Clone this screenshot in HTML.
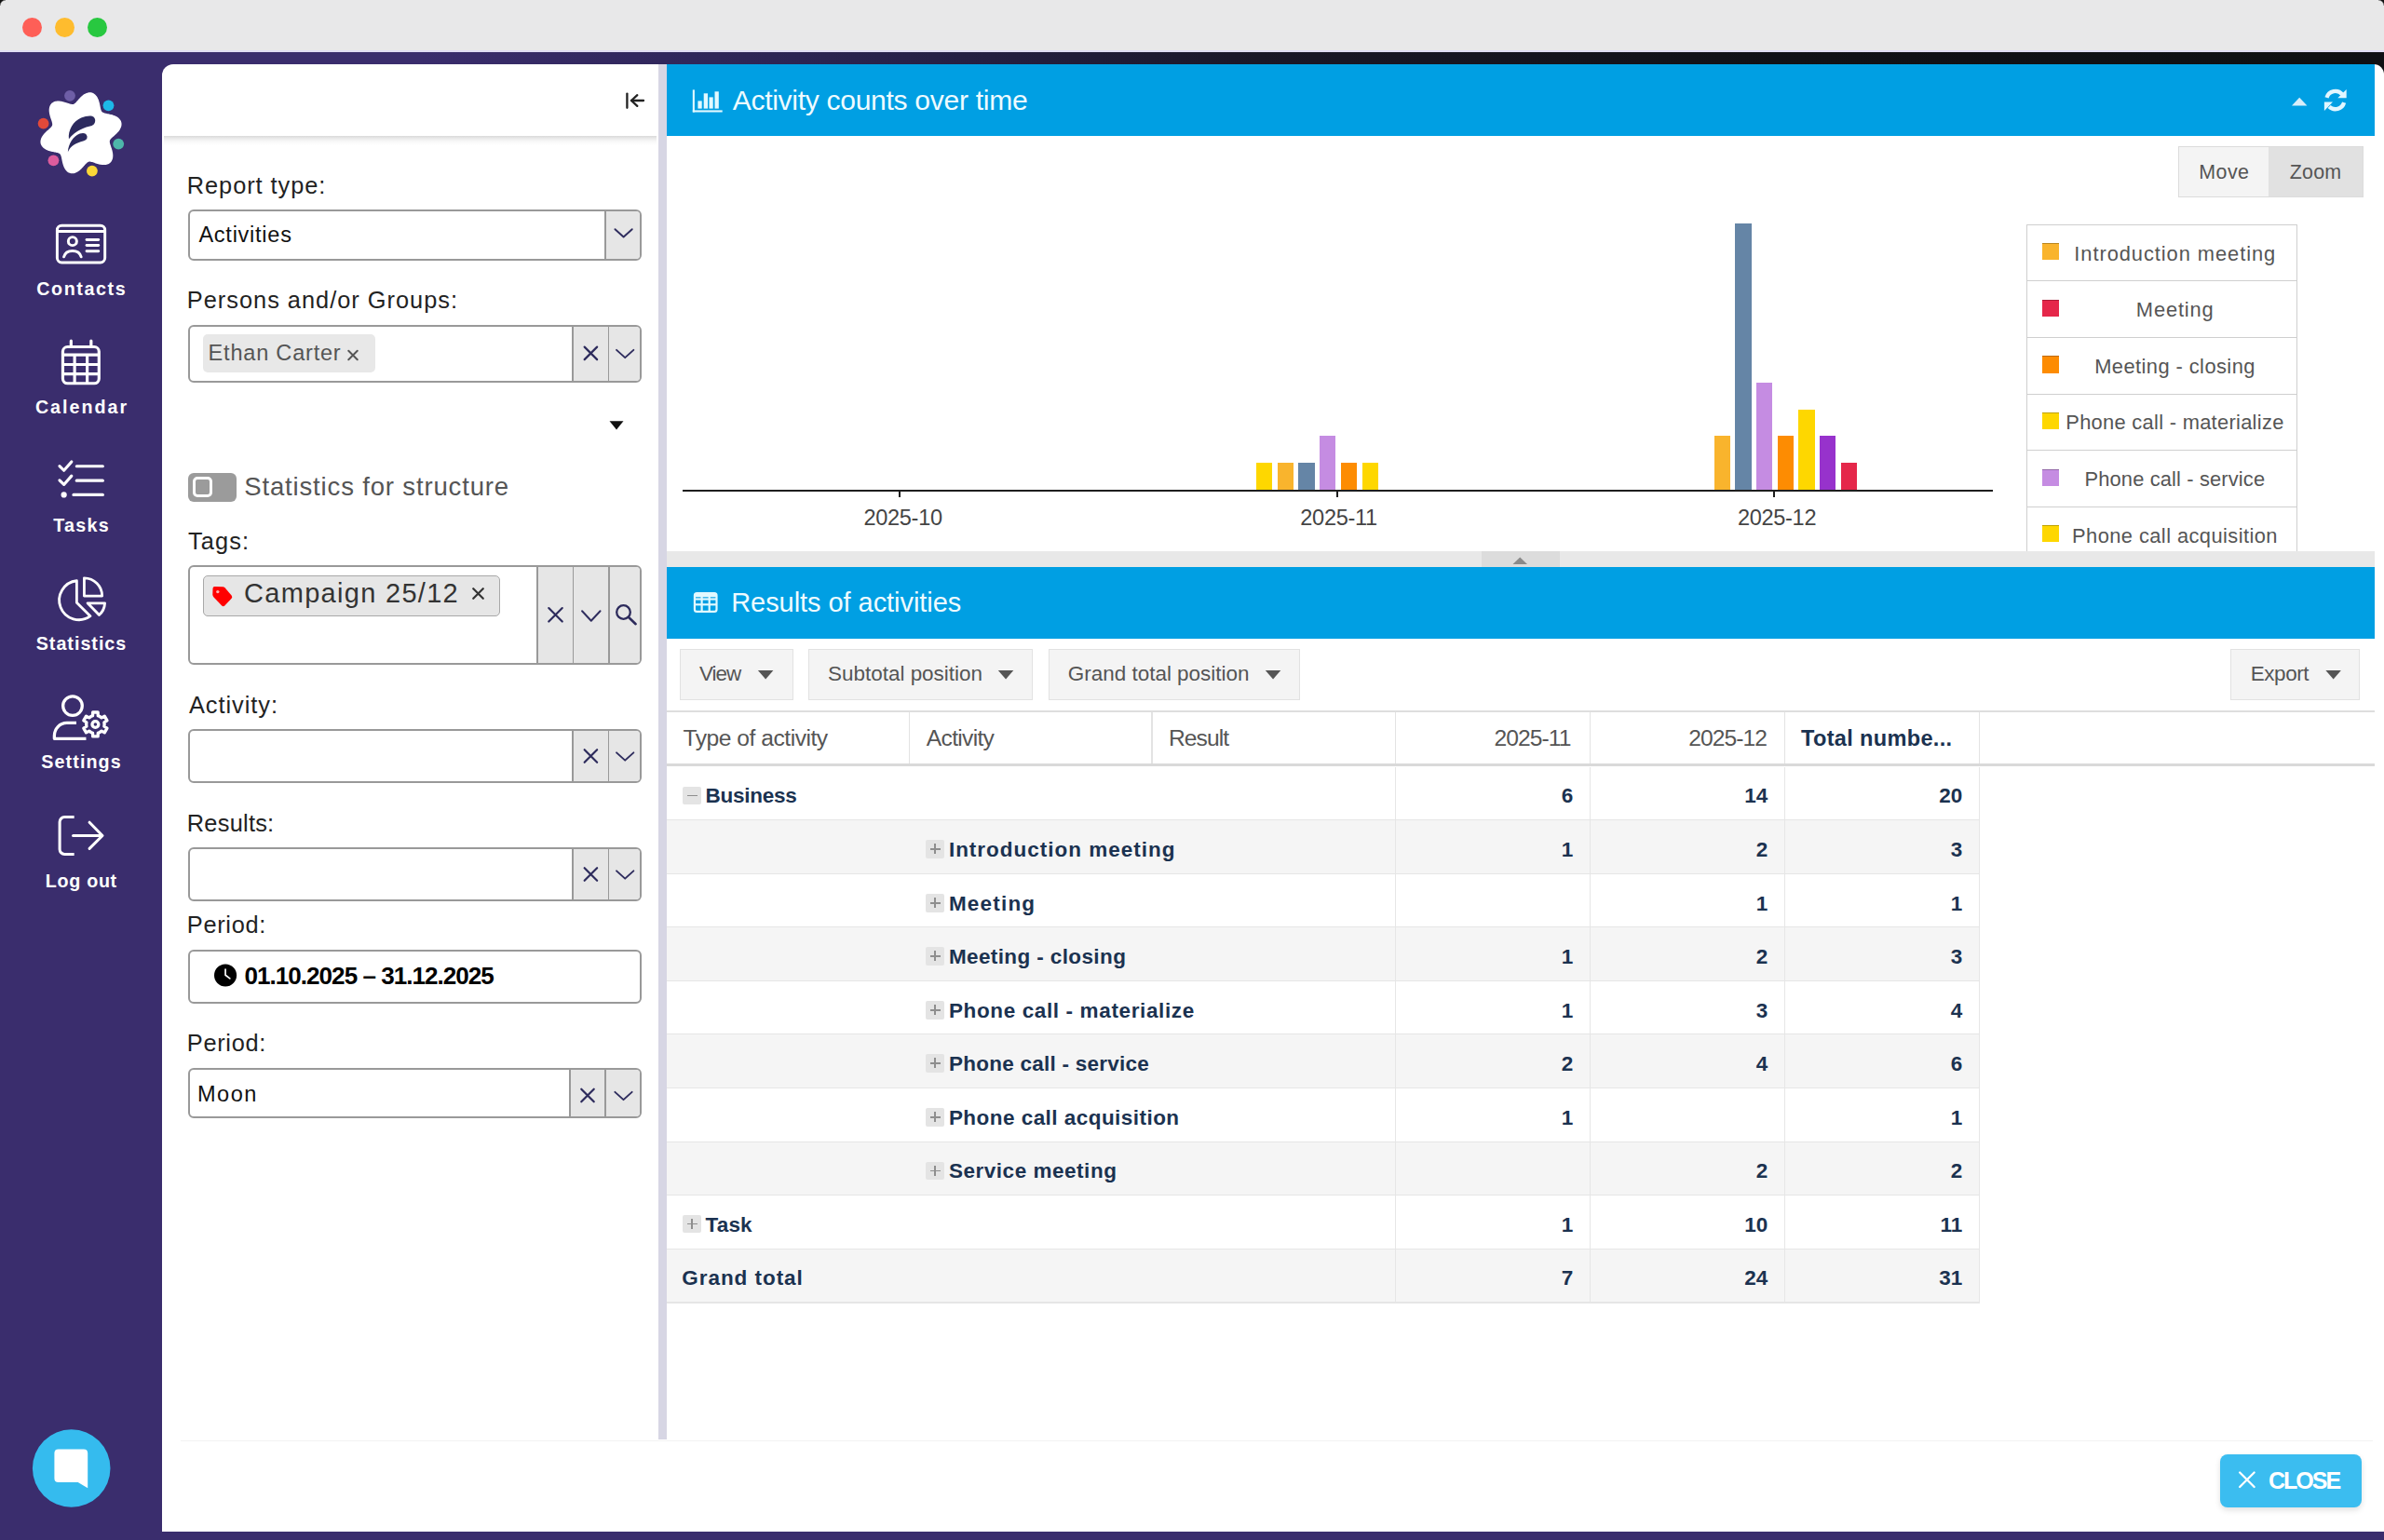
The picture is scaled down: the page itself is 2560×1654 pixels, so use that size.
<!DOCTYPE html><html><head><meta charset="utf-8"><style>
html,body{margin:0;padding:0;}
body{width:2560px;height:1654px;overflow:hidden;position:relative;background:#3a2d6d;font-family:"Liberation Sans",sans-serif;}
.t{position:absolute;white-space:nowrap;line-height:1;}
.b{position:absolute;box-sizing:border-box;}
svg{position:absolute;overflow:visible;}
</style></head><body>
<div class="b" style="left:0.00px;top:0.00px;width:2560.00px;height:55.00px;background:#e8e8e9;"></div>
<div class="b" style="left:0.00px;top:0.00px;width:6.00px;height:6.00px;background:radial-gradient(circle at 6px 6px,rgba(0,0,0,0) 5px,#111 6.5px);"></div>
<div class="b" style="left:2554.00px;top:0.00px;width:6.00px;height:6.00px;background:radial-gradient(circle at 0px 6px,rgba(0,0,0,0) 5px,#111 6.5px);"></div>
<div class="b" style="left:0.00px;top:53.50px;width:2560.00px;height:2.50px;background:#e0dcf3;"></div>
<div class="b" style="left:24.00px;top:18.60px;width:21.40px;height:21.40px;background:#fe5f57;border-radius:50%;"></div>
<div class="b" style="left:58.80px;top:18.60px;width:21.40px;height:21.40px;background:#febc2e;border-radius:50%;"></div>
<div class="b" style="left:93.80px;top:18.60px;width:21.40px;height:21.40px;background:#28c840;border-radius:50%;"></div>
<div class="b" style="left:0.00px;top:56.00px;width:2560.00px;height:34.00px;background:linear-gradient(to right,#3a2d6d 0px,#3a2d6d 450px,#2c2453 850px,#1a1727 1350px,#111116 1900px,#0f1013 2560px);"></div>
<div class="b" style="left:174.00px;top:69.00px;width:2386.00px;height:1576.00px;background:#fff;border-top-left-radius:12px;border-top-right-radius:11px;"></div>
<div class="t" style="left:2.00px;width:170px;text-align:center;top:300.52px;font-size:19.7px;color:#fff;font-weight:bold;letter-spacing:1.6px;text-indent:1.6px;">Contacts</div>
<div class="t" style="left:2.00px;width:170px;text-align:center;top:428.02px;font-size:19.7px;color:#fff;font-weight:bold;letter-spacing:2.0px;text-indent:2.0px;">Calendar</div>
<div class="t" style="left:2.00px;width:170px;text-align:center;top:555.32px;font-size:19.7px;color:#fff;font-weight:bold;letter-spacing:1.3px;text-indent:1.3px;">Tasks</div>
<div class="t" style="left:2.00px;width:170px;text-align:center;top:681.62px;font-size:19.7px;color:#fff;font-weight:bold;letter-spacing:1.0px;text-indent:1.0px;">Statistics</div>
<div class="t" style="left:2.00px;width:170px;text-align:center;top:808.72px;font-size:19.7px;color:#fff;font-weight:bold;letter-spacing:1.1px;text-indent:1.1px;">Settings</div>
<div class="t" style="left:2.00px;width:170px;text-align:center;top:936.52px;font-size:19.7px;color:#fff;font-weight:bold;letter-spacing:0.7px;text-indent:0.7px;">Log out</div>
<div class="b" style="left:176.00px;top:146.00px;width:529.00px;height:10.00px;background:linear-gradient(to bottom,#d9d9d9 0px,#ececec 3px,#f8f8f8 6px,rgba(255,255,255,0) 10px);"></div>
<div class="b" style="left:707.00px;top:69.00px;width:9.00px;height:1477.00px;background:#d7d6e4;"></div>
<div class="t" style="left:200.80px;top:186.53px;font-size:25.36px;color:#222;font-weight:normal;letter-spacing:0.95px;">Report type:</div>
<div class="t" style="left:200.80px;top:309.78px;font-size:25.36px;color:#222;font-weight:normal;letter-spacing:1.0px;">Persons and/or Groups:</div>
<div class="t" style="left:202.00px;top:568.53px;font-size:25.36px;color:#222;font-weight:normal;letter-spacing:1.1px;">Tags:</div>
<div class="t" style="left:203.00px;top:744.78px;font-size:25.36px;color:#222;font-weight:normal;letter-spacing:0.96px;">Activity:</div>
<div class="t" style="left:200.80px;top:871.53px;font-size:25.36px;color:#222;font-weight:normal;letter-spacing:0.25px;">Results:</div>
<div class="t" style="left:200.80px;top:980.53px;font-size:25.36px;color:#222;font-weight:normal;letter-spacing:0.7px;">Period:</div>
<div class="t" style="left:200.80px;top:1108.03px;font-size:25.36px;color:#222;font-weight:normal;letter-spacing:0.7px;">Period:</div>
<div class="b" style="left:202.20px;top:224.50px;width:486.90px;height:55.50px;border:2px solid #999999;border-radius:6px;background:#fff;"></div>
<div class="b" style="left:650.20px;top:226.50px;width:36.90px;height:51.50px;background:#e6e6e6;border-top-right-radius:4px;border-bottom-right-radius:4px;"></div>
<div class="b" style="left:649.40px;top:225.50px;width:1.60px;height:53.50px;background:#999999;"></div>
<div class="t" style="left:213.40px;top:240.56px;font-size:23.55px;color:#111;font-weight:normal;letter-spacing:0.74px;">Activities</div>
<div class="b" style="left:202.20px;top:348.50px;width:486.90px;height:62.00px;border:2px solid #999999;border-radius:6px;background:#fff;"></div>
<div class="b" style="left:615.20px;top:350.50px;width:71.90px;height:58.00px;background:#e6e6e6;border-top-right-radius:4px;border-bottom-right-radius:4px;"></div>
<div class="b" style="left:614.40px;top:349.50px;width:1.60px;height:60.00px;background:#999999;"></div>
<div class="b" style="left:652.60px;top:349.50px;width:1.60px;height:60.00px;background:#999999;"></div>
<div class="b" style="left:218.00px;top:358.75px;width:184.50px;height:40.75px;background:#e8e8e8;border-radius:5px;"></div>
<div class="t" style="left:223.60px;top:367.56px;font-size:23.55px;color:#555;font-weight:normal;letter-spacing:0.78px;">Ethan Carter</div>
<div class="b" style="left:202.00px;top:507.50px;width:52.00px;height:31.00px;background:#9b9b9b;border-radius:6px;"></div>
<div class="b" style="left:206.80px;top:512.30px;width:21.50px;height:21.50px;border:3.2px solid #fff;border-radius:5px;background:#9b9b9b;"></div>
<div class="t" style="left:262.20px;top:508.69px;font-size:27.54px;color:#555;font-weight:normal;letter-spacing:0.84px;">Statistics for structure</div>
<div class="b" style="left:202.20px;top:607.00px;width:486.90px;height:107.00px;border:2px solid #999999;border-radius:6px;background:#fff;"></div>
<div class="b" style="left:577.00px;top:609.00px;width:110.10px;height:103.00px;background:#e6e6e6;border-top-right-radius:4px;border-bottom-right-radius:4px;"></div>
<div class="b" style="left:576.20px;top:608.00px;width:1.60px;height:105.00px;background:#999999;"></div>
<div class="b" style="left:614.70px;top:608.00px;width:1.60px;height:105.00px;background:#999999;"></div>
<div class="b" style="left:652.95px;top:608.00px;width:1.60px;height:105.00px;background:#999999;"></div>
<div class="b" style="left:218.25px;top:617.50px;width:318.50px;height:44.50px;background:#e6e6e6;border:1.6px solid #a8a8a8;border-radius:5px;"></div>
<div class="t" style="left:262.00px;top:622.96px;font-size:28.99px;color:#333;font-weight:normal;letter-spacing:1.31px;">Campaign 25/12</div>
<div class="b" style="left:202.20px;top:783.00px;width:486.90px;height:58.00px;border:2px solid #999999;border-radius:6px;background:#fff;"></div>
<div class="b" style="left:615.20px;top:785.00px;width:71.90px;height:54.00px;background:#e6e6e6;border-top-right-radius:4px;border-bottom-right-radius:4px;"></div>
<div class="b" style="left:614.40px;top:784.00px;width:1.60px;height:56.00px;background:#999999;"></div>
<div class="b" style="left:652.60px;top:784.00px;width:1.60px;height:56.00px;background:#999999;"></div>
<div class="b" style="left:202.20px;top:910.00px;width:486.90px;height:58.00px;border:2px solid #999999;border-radius:6px;background:#fff;"></div>
<div class="b" style="left:615.20px;top:912.00px;width:71.90px;height:54.00px;background:#e6e6e6;border-top-right-radius:4px;border-bottom-right-radius:4px;"></div>
<div class="b" style="left:614.40px;top:911.00px;width:1.60px;height:56.00px;background:#999999;"></div>
<div class="b" style="left:652.60px;top:911.00px;width:1.60px;height:56.00px;background:#999999;"></div>
<div class="b" style="left:202.20px;top:1020.00px;width:486.90px;height:57.75px;border:2px solid #999999;border-radius:6px;background:#fff;"></div>
<div class="t" style="left:262.50px;top:1034.93px;font-size:26.07px;color:#000;font-weight:bold;letter-spacing:-0.98px;">01.10.2025 – 31.12.2025</div>
<div class="b" style="left:202.20px;top:1147.00px;width:486.90px;height:54.25px;border:2px solid #999999;border-radius:6px;background:#fff;"></div>
<div class="b" style="left:612.00px;top:1149.00px;width:75.10px;height:50.25px;background:#e6e6e6;border-top-right-radius:4px;border-bottom-right-radius:4px;"></div>
<div class="b" style="left:611.20px;top:1148.00px;width:1.60px;height:52.25px;background:#999999;"></div>
<div class="b" style="left:649.20px;top:1148.00px;width:1.60px;height:52.25px;background:#999999;"></div>
<div class="t" style="left:212.00px;top:1164.06px;font-size:23.55px;color:#111;font-weight:normal;letter-spacing:1.48px;">Moon</div>
<div class="b" style="left:716.00px;top:69.00px;width:1833.50px;height:77.00px;background:#009fe3;"></div>
<div class="t" style="left:786.70px;top:93.30px;font-size:30.07px;color:#eefbff;font-weight:normal;letter-spacing:-0.3px;">Activity counts over time</div>
<div class="b" style="left:2339.30px;top:156.90px;width:198.40px;height:54.90px;border:1px solid #dcdcdc;background:#f4f4f4;"></div>
<div class="b" style="left:2436.40px;top:157.90px;width:100.30px;height:52.90px;background:#e1e1e1;"></div>
<div class="t" style="left:2338.20px;width:100px;text-align:center;top:175.04px;font-size:21.45px;color:#555;font-weight:normal;letter-spacing:0.43px;text-indent:0.43px;">Move</div>
<div class="t" style="left:2436.50px;width:100px;text-align:center;top:175.04px;font-size:21.45px;color:#555;font-weight:normal;letter-spacing:0.19px;text-indent:0.19px;">Zoom</div>
<div class="b" style="left:733.00px;top:525.60px;width:1407.30px;height:2.00px;background:#1e1e1e;"></div>
<div class="b" style="left:965.25px;top:527.00px;width:2.00px;height:7.30px;background:#1e1e1e;"></div>
<div class="b" style="left:1434.75px;top:527.00px;width:2.00px;height:7.30px;background:#1e1e1e;"></div>
<div class="b" style="left:1904.00px;top:527.00px;width:2.00px;height:7.30px;background:#1e1e1e;"></div>
<div class="t" style="left:899.75px;width:140px;text-align:center;top:545.06px;font-size:23.55px;color:#444;font-weight:normal;letter-spacing:-0.3px;text-indent:-0.3px;">2025-10</div>
<div class="t" style="left:1367.75px;width:140px;text-align:center;top:545.06px;font-size:23.55px;color:#444;font-weight:normal;letter-spacing:-0.3px;text-indent:-0.3px;">2025-11</div>
<div class="t" style="left:1838.20px;width:140px;text-align:center;top:545.06px;font-size:23.55px;color:#444;font-weight:normal;letter-spacing:-0.3px;text-indent:-0.3px;">2025-12</div>
<div class="b" style="left:1348.75px;top:496.98px;width:17.40px;height:29.22px;background:#fed700;"></div>
<div class="b" style="left:1371.50px;top:496.98px;width:17.40px;height:29.22px;background:#f9b42d;"></div>
<div class="b" style="left:1394.25px;top:496.98px;width:17.40px;height:29.22px;background:#6585a6;"></div>
<div class="b" style="left:1417.00px;top:468.46px;width:17.40px;height:57.74px;background:#c58ce2;"></div>
<div class="b" style="left:1439.75px;top:496.98px;width:17.40px;height:29.22px;background:#fd8c02;"></div>
<div class="b" style="left:1462.50px;top:496.98px;width:17.40px;height:29.22px;background:#fed700;"></div>
<div class="b" style="left:1840.75px;top:468.46px;width:17.40px;height:57.74px;background:#f9b42d;"></div>
<div class="b" style="left:1863.40px;top:240.30px;width:17.40px;height:285.90px;background:#6585a6;"></div>
<div class="b" style="left:1886.05px;top:411.42px;width:17.40px;height:114.78px;background:#c58ce2;"></div>
<div class="b" style="left:1908.70px;top:468.46px;width:17.40px;height:57.74px;background:#fd8c02;"></div>
<div class="b" style="left:1931.35px;top:439.94px;width:17.40px;height:86.26px;background:#fed700;"></div>
<div class="b" style="left:1954.00px;top:468.46px;width:17.40px;height:57.74px;background:#9732cc;"></div>
<div class="b" style="left:1976.65px;top:496.98px;width:17.40px;height:29.22px;background:#e5274a;"></div>
<div class="b" style="left:2175.5px;top:240.8px;width:291.5px;height:351.2px;overflow:hidden;">
<div class="b" style="left:0;top:0.00px;width:291.5px;height:62.10px;border:1.5px solid #cfcfcf;background:#fff;"></div>
<div class="b" style="left:17px;top:20.40px;width:18.6px;height:18.3px;background:#f9b42d;border-top:1.5px solid rgba(0,0,0,0.25);"></div>
<div class="t" style="left:9.80px;width:300px;text-align:center;top:20.78px;font-size:21.88px;color:#555;letter-spacing:0.93px;text-indent:0.93px;">Introduction meeting</div>
<div class="b" style="left:0;top:60.60px;width:291.5px;height:62.10px;border:1.5px solid #cfcfcf;background:#fff;"></div>
<div class="b" style="left:17px;top:81.00px;width:18.6px;height:18.3px;background:#e5274a;border-top:1.5px solid rgba(0,0,0,0.25);"></div>
<div class="t" style="left:9.80px;width:300px;text-align:center;top:81.38px;font-size:21.88px;color:#555;letter-spacing:0.86px;text-indent:0.86px;">Meeting</div>
<div class="b" style="left:0;top:121.20px;width:291.5px;height:62.10px;border:1.5px solid #cfcfcf;background:#fff;"></div>
<div class="b" style="left:17px;top:141.60px;width:18.6px;height:18.3px;background:#fd8c02;border-top:1.5px solid rgba(0,0,0,0.25);"></div>
<div class="t" style="left:9.80px;width:300px;text-align:center;top:141.98px;font-size:21.88px;color:#555;letter-spacing:0.43px;text-indent:0.43px;">Meeting - closing</div>
<div class="b" style="left:0;top:181.80px;width:291.5px;height:62.10px;border:1.5px solid #cfcfcf;background:#fff;"></div>
<div class="b" style="left:17px;top:202.20px;width:18.6px;height:18.3px;background:#fed700;border-top:1.5px solid rgba(0,0,0,0.25);"></div>
<div class="t" style="left:9.80px;width:300px;text-align:center;top:202.58px;font-size:21.88px;color:#555;letter-spacing:0.29px;text-indent:0.29px;">Phone call - materialize</div>
<div class="b" style="left:0;top:242.40px;width:291.5px;height:62.10px;border:1.5px solid #cfcfcf;background:#fff;"></div>
<div class="b" style="left:17px;top:262.80px;width:18.6px;height:18.3px;background:#c58ce2;border-top:1.5px solid rgba(0,0,0,0.25);"></div>
<div class="t" style="left:9.80px;width:300px;text-align:center;top:263.18px;font-size:21.88px;color:#555;letter-spacing:0.14px;text-indent:0.14px;">Phone call - service</div>
<div class="b" style="left:0;top:303.00px;width:291.5px;height:62.10px;border:1.5px solid #cfcfcf;background:#fff;"></div>
<div class="b" style="left:17px;top:323.40px;width:18.6px;height:18.3px;background:#fed700;border-top:1.5px solid rgba(0,0,0,0.25);"></div>
<div class="t" style="left:9.80px;width:300px;text-align:center;top:323.78px;font-size:21.88px;color:#555;letter-spacing:0.42px;text-indent:0.42px;">Phone call acquisition</div>
</div>
<div class="b" style="left:716.00px;top:592.00px;width:1833.50px;height:17.00px;background:#e8e8e8;"></div>
<div class="b" style="left:1590.50px;top:592.00px;width:84.00px;height:17.00px;background:#dcdcdc;"></div>
<div class="b" style="left:716.00px;top:608.75px;width:1833.50px;height:77.00px;background:#009fe3;"></div>
<div class="t" style="left:785.20px;top:633.46px;font-size:28.99px;color:#eefbff;font-weight:normal;letter-spacing:-0.05px;">Results of activities</div>
<div class="b" style="left:730.00px;top:696.50px;width:121.75px;height:55.25px;border:1px solid #e2e2e2;background:#f4f4f4;"></div>
<div class="t" style="left:751.00px;top:713.49px;font-size:22.46px;color:#555;font-weight:normal;letter-spacing:-1.0px;">View</div>
<div class="b" style="left:868.00px;top:696.50px;width:240.75px;height:55.25px;border:1px solid #e2e2e2;background:#f4f4f4;"></div>
<div class="t" style="left:889.00px;top:713.49px;font-size:22.46px;color:#555;font-weight:normal;letter-spacing:0.0px;">Subtotal position</div>
<div class="b" style="left:1125.50px;top:696.50px;width:270.75px;height:55.25px;border:1px solid #e2e2e2;background:#f4f4f4;"></div>
<div class="t" style="left:1146.80px;top:713.49px;font-size:22.46px;color:#555;font-weight:normal;letter-spacing:0.0px;">Grand total position</div>
<div class="b" style="left:2394.80px;top:696.50px;width:139.20px;height:55.25px;border:1px solid #e2e2e2;background:#f4f4f4;"></div>
<div class="t" style="left:2416.80px;top:713.49px;font-size:22.46px;color:#555;font-weight:normal;letter-spacing:-0.45px;">Export</div>
<div class="b" style="left:716.00px;top:762.50px;width:1833.50px;height:2.00px;background:#dedede;"></div>
<div class="b" style="left:716.00px;top:820.30px;width:1833.50px;height:3.20px;background:#d9d9d9;"></div>
<div class="b" style="left:975.65px;top:764.50px;width:1.50px;height:55.80px;background:#e3e3e3;"></div>
<div class="b" style="left:1236.40px;top:764.50px;width:1.50px;height:55.80px;background:#e3e3e3;"></div>
<div class="b" style="left:1497.65px;top:764.50px;width:1.50px;height:55.80px;background:#e3e3e3;"></div>
<div class="b" style="left:1706.90px;top:764.50px;width:1.50px;height:55.80px;background:#e3e3e3;"></div>
<div class="b" style="left:1915.90px;top:764.50px;width:1.50px;height:55.80px;background:#e3e3e3;"></div>
<div class="b" style="left:2124.70px;top:764.50px;width:1.50px;height:55.80px;background:#e3e3e3;"></div>
<div class="t" style="left:733.60px;top:781.44px;font-size:24.64px;color:#555;font-weight:normal;letter-spacing:-0.49px;">Type of activity</div>
<div class="t" style="left:994.80px;top:781.44px;font-size:24.64px;color:#555;font-weight:normal;letter-spacing:-0.7px;">Activity</div>
<div class="t" style="left:1255.00px;top:781.44px;font-size:24.64px;color:#555;font-weight:normal;letter-spacing:-0.94px;">Result</div>
<div class="t" style="right:874.50px;top:781.44px;font-size:24.64px;color:#555;font-weight:normal;letter-spacing:-0.93px;text-align:right;margin-right:-0.93px;">2025-11</div>
<div class="t" style="right:663.80px;top:781.44px;font-size:24.64px;color:#555;font-weight:normal;letter-spacing:-0.93px;text-align:right;margin-right:-0.93px;">2025-12</div>
<div class="t" style="left:1934.00px;top:782.35px;font-size:23.57px;color:#1b3250;font-weight:bold;letter-spacing:0.32px;">Total numbe...</div>
<div class="b" style="left:716.00px;top:823.50px;width:1409.80px;height:57.75px;background:#fff;"></div>
<div class="b" style="left:716.00px;top:880.45px;width:1409.80px;height:1.60px;background:#e6e6e6;"></div>
<div class="b" style="left:1497.65px;top:823.50px;width:1.50px;height:57.75px;background:#e6e6e6;"></div>
<div class="b" style="left:1706.90px;top:823.50px;width:1.50px;height:57.75px;background:#e6e6e6;"></div>
<div class="b" style="left:1915.90px;top:823.50px;width:1.50px;height:57.75px;background:#e6e6e6;"></div>
<div class="b" style="left:2124.70px;top:823.50px;width:1.50px;height:57.75px;background:#e6e6e6;"></div>
<div class="b" style="left:733.25px;top:844.50px;width:19.60px;height:19.40px;background:#e4e4e4;border-radius:2px;"></div>
<div class="b" style="left:737.55px;top:853.50px;width:11.00px;height:1.60px;background:#8e8e8e;"></div>
<div class="t" style="left:757.60px;top:844.25px;font-size:22.5px;color:#1b3250;font-weight:bold;letter-spacing:-0.25px;">Business</div>
<div class="t" style="right:870.80px;top:844.25px;font-size:22.5px;color:#1b3250;font-weight:bold;letter-spacing:0px;text-align:right;">6</div>
<div class="t" style="right:661.80px;top:844.25px;font-size:22.5px;color:#1b3250;font-weight:bold;letter-spacing:0px;text-align:right;">14</div>
<div class="t" style="right:452.80px;top:844.25px;font-size:22.5px;color:#1b3250;font-weight:bold;letter-spacing:0px;text-align:right;">20</div>
<div class="b" style="left:716.00px;top:881.25px;width:1409.80px;height:58.00px;background:#f5f5f5;"></div>
<div class="b" style="left:716.00px;top:938.45px;width:1409.80px;height:1.60px;background:#e6e6e6;"></div>
<div class="b" style="left:1497.65px;top:881.25px;width:1.50px;height:58.00px;background:#e6e6e6;"></div>
<div class="b" style="left:1706.90px;top:881.25px;width:1.50px;height:58.00px;background:#e6e6e6;"></div>
<div class="b" style="left:1915.90px;top:881.25px;width:1.50px;height:58.00px;background:#e6e6e6;"></div>
<div class="b" style="left:2124.70px;top:881.25px;width:1.50px;height:58.00px;background:#e6e6e6;"></div>
<div class="b" style="left:994.25px;top:902.25px;width:19.60px;height:19.40px;background:#e4e4e4;border-radius:2px;"></div>
<div class="b" style="left:998.55px;top:911.25px;width:11.00px;height:1.40px;background:#8e8e8e;"></div>
<div class="b" style="left:1003.35px;top:906.45px;width:1.40px;height:11.00px;background:#8e8e8e;"></div>
<div class="t" style="left:1018.90px;top:902.00px;font-size:22.5px;color:#1b3250;font-weight:bold;letter-spacing:0.99px;">Introduction meeting</div>
<div class="t" style="right:870.80px;top:902.00px;font-size:22.5px;color:#1b3250;font-weight:bold;letter-spacing:0px;text-align:right;">1</div>
<div class="t" style="right:661.80px;top:902.00px;font-size:22.5px;color:#1b3250;font-weight:bold;letter-spacing:0px;text-align:right;">2</div>
<div class="t" style="right:452.80px;top:902.00px;font-size:22.5px;color:#1b3250;font-weight:bold;letter-spacing:0px;text-align:right;">3</div>
<div class="b" style="left:716.00px;top:939.25px;width:1409.80px;height:57.00px;background:#fff;"></div>
<div class="b" style="left:716.00px;top:995.45px;width:1409.80px;height:1.60px;background:#e6e6e6;"></div>
<div class="b" style="left:1497.65px;top:939.25px;width:1.50px;height:57.00px;background:#e6e6e6;"></div>
<div class="b" style="left:1706.90px;top:939.25px;width:1.50px;height:57.00px;background:#e6e6e6;"></div>
<div class="b" style="left:1915.90px;top:939.25px;width:1.50px;height:57.00px;background:#e6e6e6;"></div>
<div class="b" style="left:2124.70px;top:939.25px;width:1.50px;height:57.00px;background:#e6e6e6;"></div>
<div class="b" style="left:994.25px;top:960.25px;width:19.60px;height:19.40px;background:#e4e4e4;border-radius:2px;"></div>
<div class="b" style="left:998.55px;top:969.25px;width:11.00px;height:1.40px;background:#8e8e8e;"></div>
<div class="b" style="left:1003.35px;top:964.45px;width:1.40px;height:11.00px;background:#8e8e8e;"></div>
<div class="t" style="left:1018.90px;top:960.00px;font-size:22.5px;color:#1b3250;font-weight:bold;letter-spacing:1.2px;">Meeting</div>
<div class="t" style="right:661.80px;top:960.00px;font-size:22.5px;color:#1b3250;font-weight:bold;letter-spacing:0px;text-align:right;">1</div>
<div class="t" style="right:452.80px;top:960.00px;font-size:22.5px;color:#1b3250;font-weight:bold;letter-spacing:0px;text-align:right;">1</div>
<div class="b" style="left:716.00px;top:996.25px;width:1409.80px;height:58.00px;background:#f5f5f5;"></div>
<div class="b" style="left:716.00px;top:1053.45px;width:1409.80px;height:1.60px;background:#e6e6e6;"></div>
<div class="b" style="left:1497.65px;top:996.25px;width:1.50px;height:58.00px;background:#e6e6e6;"></div>
<div class="b" style="left:1706.90px;top:996.25px;width:1.50px;height:58.00px;background:#e6e6e6;"></div>
<div class="b" style="left:1915.90px;top:996.25px;width:1.50px;height:58.00px;background:#e6e6e6;"></div>
<div class="b" style="left:2124.70px;top:996.25px;width:1.50px;height:58.00px;background:#e6e6e6;"></div>
<div class="b" style="left:994.25px;top:1017.25px;width:19.60px;height:19.40px;background:#e4e4e4;border-radius:2px;"></div>
<div class="b" style="left:998.55px;top:1026.25px;width:11.00px;height:1.40px;background:#8e8e8e;"></div>
<div class="b" style="left:1003.35px;top:1021.45px;width:1.40px;height:11.00px;background:#8e8e8e;"></div>
<div class="t" style="left:1018.90px;top:1017.00px;font-size:22.5px;color:#1b3250;font-weight:bold;letter-spacing:0.39px;">Meeting - closing</div>
<div class="t" style="right:870.80px;top:1017.00px;font-size:22.5px;color:#1b3250;font-weight:bold;letter-spacing:0px;text-align:right;">1</div>
<div class="t" style="right:661.80px;top:1017.00px;font-size:22.5px;color:#1b3250;font-weight:bold;letter-spacing:0px;text-align:right;">2</div>
<div class="t" style="right:452.80px;top:1017.00px;font-size:22.5px;color:#1b3250;font-weight:bold;letter-spacing:0px;text-align:right;">3</div>
<div class="b" style="left:716.00px;top:1054.25px;width:1409.80px;height:57.00px;background:#fff;"></div>
<div class="b" style="left:716.00px;top:1110.45px;width:1409.80px;height:1.60px;background:#e6e6e6;"></div>
<div class="b" style="left:1497.65px;top:1054.25px;width:1.50px;height:57.00px;background:#e6e6e6;"></div>
<div class="b" style="left:1706.90px;top:1054.25px;width:1.50px;height:57.00px;background:#e6e6e6;"></div>
<div class="b" style="left:1915.90px;top:1054.25px;width:1.50px;height:57.00px;background:#e6e6e6;"></div>
<div class="b" style="left:2124.70px;top:1054.25px;width:1.50px;height:57.00px;background:#e6e6e6;"></div>
<div class="b" style="left:994.25px;top:1075.25px;width:19.60px;height:19.40px;background:#e4e4e4;border-radius:2px;"></div>
<div class="b" style="left:998.55px;top:1084.25px;width:11.00px;height:1.40px;background:#8e8e8e;"></div>
<div class="b" style="left:1003.35px;top:1079.45px;width:1.40px;height:11.00px;background:#8e8e8e;"></div>
<div class="t" style="left:1018.90px;top:1075.00px;font-size:22.5px;color:#1b3250;font-weight:bold;letter-spacing:0.63px;">Phone call - materialize</div>
<div class="t" style="right:870.80px;top:1075.00px;font-size:22.5px;color:#1b3250;font-weight:bold;letter-spacing:0px;text-align:right;">1</div>
<div class="t" style="right:661.80px;top:1075.00px;font-size:22.5px;color:#1b3250;font-weight:bold;letter-spacing:0px;text-align:right;">3</div>
<div class="t" style="right:452.80px;top:1075.00px;font-size:22.5px;color:#1b3250;font-weight:bold;letter-spacing:0px;text-align:right;">4</div>
<div class="b" style="left:716.00px;top:1111.25px;width:1409.80px;height:58.00px;background:#f5f5f5;"></div>
<div class="b" style="left:716.00px;top:1168.45px;width:1409.80px;height:1.60px;background:#e6e6e6;"></div>
<div class="b" style="left:1497.65px;top:1111.25px;width:1.50px;height:58.00px;background:#e6e6e6;"></div>
<div class="b" style="left:1706.90px;top:1111.25px;width:1.50px;height:58.00px;background:#e6e6e6;"></div>
<div class="b" style="left:1915.90px;top:1111.25px;width:1.50px;height:58.00px;background:#e6e6e6;"></div>
<div class="b" style="left:2124.70px;top:1111.25px;width:1.50px;height:58.00px;background:#e6e6e6;"></div>
<div class="b" style="left:994.25px;top:1132.25px;width:19.60px;height:19.40px;background:#e4e4e4;border-radius:2px;"></div>
<div class="b" style="left:998.55px;top:1141.25px;width:11.00px;height:1.40px;background:#8e8e8e;"></div>
<div class="b" style="left:1003.35px;top:1136.45px;width:1.40px;height:11.00px;background:#8e8e8e;"></div>
<div class="t" style="left:1018.90px;top:1132.00px;font-size:22.5px;color:#1b3250;font-weight:bold;letter-spacing:0.25px;">Phone call - service</div>
<div class="t" style="right:870.80px;top:1132.00px;font-size:22.5px;color:#1b3250;font-weight:bold;letter-spacing:0px;text-align:right;">2</div>
<div class="t" style="right:661.80px;top:1132.00px;font-size:22.5px;color:#1b3250;font-weight:bold;letter-spacing:0px;text-align:right;">4</div>
<div class="t" style="right:452.80px;top:1132.00px;font-size:22.5px;color:#1b3250;font-weight:bold;letter-spacing:0px;text-align:right;">6</div>
<div class="b" style="left:716.00px;top:1169.25px;width:1409.80px;height:57.25px;background:#fff;"></div>
<div class="b" style="left:716.00px;top:1225.70px;width:1409.80px;height:1.60px;background:#e6e6e6;"></div>
<div class="b" style="left:1497.65px;top:1169.25px;width:1.50px;height:57.25px;background:#e6e6e6;"></div>
<div class="b" style="left:1706.90px;top:1169.25px;width:1.50px;height:57.25px;background:#e6e6e6;"></div>
<div class="b" style="left:1915.90px;top:1169.25px;width:1.50px;height:57.25px;background:#e6e6e6;"></div>
<div class="b" style="left:2124.70px;top:1169.25px;width:1.50px;height:57.25px;background:#e6e6e6;"></div>
<div class="b" style="left:994.25px;top:1190.25px;width:19.60px;height:19.40px;background:#e4e4e4;border-radius:2px;"></div>
<div class="b" style="left:998.55px;top:1199.25px;width:11.00px;height:1.40px;background:#8e8e8e;"></div>
<div class="b" style="left:1003.35px;top:1194.45px;width:1.40px;height:11.00px;background:#8e8e8e;"></div>
<div class="t" style="left:1018.90px;top:1190.00px;font-size:22.5px;color:#1b3250;font-weight:bold;letter-spacing:0.46px;">Phone call acquisition</div>
<div class="t" style="right:870.80px;top:1190.00px;font-size:22.5px;color:#1b3250;font-weight:bold;letter-spacing:0px;text-align:right;">1</div>
<div class="t" style="right:452.80px;top:1190.00px;font-size:22.5px;color:#1b3250;font-weight:bold;letter-spacing:0px;text-align:right;">1</div>
<div class="b" style="left:716.00px;top:1226.50px;width:1409.80px;height:57.50px;background:#f5f5f5;"></div>
<div class="b" style="left:716.00px;top:1283.20px;width:1409.80px;height:1.60px;background:#e6e6e6;"></div>
<div class="b" style="left:1497.65px;top:1226.50px;width:1.50px;height:57.50px;background:#e6e6e6;"></div>
<div class="b" style="left:1706.90px;top:1226.50px;width:1.50px;height:57.50px;background:#e6e6e6;"></div>
<div class="b" style="left:1915.90px;top:1226.50px;width:1.50px;height:57.50px;background:#e6e6e6;"></div>
<div class="b" style="left:2124.70px;top:1226.50px;width:1.50px;height:57.50px;background:#e6e6e6;"></div>
<div class="b" style="left:994.25px;top:1247.50px;width:19.60px;height:19.40px;background:#e4e4e4;border-radius:2px;"></div>
<div class="b" style="left:998.55px;top:1256.50px;width:11.00px;height:1.40px;background:#8e8e8e;"></div>
<div class="b" style="left:1003.35px;top:1251.70px;width:1.40px;height:11.00px;background:#8e8e8e;"></div>
<div class="t" style="left:1018.90px;top:1247.25px;font-size:22.5px;color:#1b3250;font-weight:bold;letter-spacing:0.53px;">Service meeting</div>
<div class="t" style="right:661.80px;top:1247.25px;font-size:22.5px;color:#1b3250;font-weight:bold;letter-spacing:0px;text-align:right;">2</div>
<div class="t" style="right:452.80px;top:1247.25px;font-size:22.5px;color:#1b3250;font-weight:bold;letter-spacing:0px;text-align:right;">2</div>
<div class="b" style="left:716.00px;top:1284.00px;width:1409.80px;height:57.50px;background:#fff;"></div>
<div class="b" style="left:716.00px;top:1340.70px;width:1409.80px;height:1.60px;background:#e6e6e6;"></div>
<div class="b" style="left:1497.65px;top:1284.00px;width:1.50px;height:57.50px;background:#e6e6e6;"></div>
<div class="b" style="left:1706.90px;top:1284.00px;width:1.50px;height:57.50px;background:#e6e6e6;"></div>
<div class="b" style="left:1915.90px;top:1284.00px;width:1.50px;height:57.50px;background:#e6e6e6;"></div>
<div class="b" style="left:2124.70px;top:1284.00px;width:1.50px;height:57.50px;background:#e6e6e6;"></div>
<div class="b" style="left:733.25px;top:1305.00px;width:19.60px;height:19.40px;background:#e4e4e4;border-radius:2px;"></div>
<div class="b" style="left:737.55px;top:1314.00px;width:11.00px;height:1.40px;background:#8e8e8e;"></div>
<div class="b" style="left:742.35px;top:1309.20px;width:1.40px;height:11.00px;background:#8e8e8e;"></div>
<div class="t" style="left:757.60px;top:1304.75px;font-size:22.5px;color:#1b3250;font-weight:bold;letter-spacing:0.13px;">Task</div>
<div class="t" style="right:870.80px;top:1304.75px;font-size:22.5px;color:#1b3250;font-weight:bold;letter-spacing:0px;text-align:right;">1</div>
<div class="t" style="right:661.80px;top:1304.75px;font-size:22.5px;color:#1b3250;font-weight:bold;letter-spacing:0px;text-align:right;">10</div>
<div class="t" style="right:452.80px;top:1304.75px;font-size:22.5px;color:#1b3250;font-weight:bold;letter-spacing:0px;text-align:right;">11</div>
<div class="b" style="left:716.00px;top:1341.50px;width:1409.80px;height:57.50px;background:#f5f5f5;"></div>
<div class="b" style="left:716.00px;top:1398.20px;width:1409.80px;height:1.60px;background:#e6e6e6;"></div>
<div class="b" style="left:1497.65px;top:1341.50px;width:1.50px;height:57.50px;background:#e6e6e6;"></div>
<div class="b" style="left:1706.90px;top:1341.50px;width:1.50px;height:57.50px;background:#e6e6e6;"></div>
<div class="b" style="left:1915.90px;top:1341.50px;width:1.50px;height:57.50px;background:#e6e6e6;"></div>
<div class="b" style="left:2124.70px;top:1341.50px;width:1.50px;height:57.50px;background:#e6e6e6;"></div>
<div class="t" style="left:732.30px;top:1362.25px;font-size:22.5px;color:#1b3250;font-weight:bold;letter-spacing:0.95px;">Grand total</div>
<div class="t" style="right:870.80px;top:1362.25px;font-size:22.5px;color:#1b3250;font-weight:bold;letter-spacing:0px;text-align:right;">7</div>
<div class="t" style="right:661.80px;top:1362.25px;font-size:22.5px;color:#1b3250;font-weight:bold;letter-spacing:0px;text-align:right;">24</div>
<div class="t" style="right:452.80px;top:1362.25px;font-size:22.5px;color:#1b3250;font-weight:bold;letter-spacing:0px;text-align:right;">31</div>
<div class="b" style="left:194.00px;top:1546.50px;width:2354.00px;height:1.20px;background:#f3f3f3;"></div>
<div class="b" style="left:2384.00px;top:1561.75px;width:151.75px;height:57.00px;background:#3bbdf0;border-radius:8px;box-shadow:0 3px 6px rgba(0,0,0,0.12);"></div>
<div class="t" style="left:2436.00px;top:1577.59px;font-size:25.0px;color:#fff;font-weight:bold;letter-spacing:-2.0px;">CLOSE</div>
<svg width="2560" height="1654" viewBox="0 0 2560 1654" style="left:0;top:0;position:absolute;"><polygon points="125.86,142.80 125.20,143.47 124.54,144.11 123.87,144.73 123.20,145.33 122.54,145.91 121.90,146.47 121.28,147.01 120.69,147.53 120.13,148.05 119.62,148.55 119.16,149.05 118.74,149.55 118.39,150.05 118.11,150.56 117.91,151.08 117.82,151.64 117.81,152.22 117.87,152.83 117.97,153.46 118.13,154.13 118.32,154.82 118.54,155.54 118.79,156.29 119.06,157.07 119.33,157.88 119.62,158.71 119.89,159.56 120.16,160.43 120.42,161.32 120.65,162.23 120.86,163.14 121.03,164.07 121.17,164.99 121.26,165.91 121.31,166.82 121.30,167.72 121.24,168.60 121.13,169.46 120.96,170.30 120.73,171.10 120.43,171.86 120.08,172.59 119.67,173.27 119.20,173.90 118.68,174.48 118.10,175.00 117.47,175.47 116.79,175.88 116.06,176.23 115.30,176.53 114.50,176.76 113.66,176.93 112.80,177.04 111.92,177.10 111.02,177.11 110.11,177.06 109.19,176.97 108.27,176.83 107.34,176.66 106.43,176.45 105.52,176.22 104.63,175.96 103.76,175.69 102.91,175.42 102.08,175.13 101.27,174.86 100.49,174.59 99.74,174.34 99.02,174.12 98.33,173.93 97.66,173.77 97.03,173.67 96.42,173.61 95.84,173.62 95.28,173.71 94.76,173.91 94.25,174.19 93.75,174.54 93.25,174.96 92.75,175.42 92.25,175.93 91.73,176.49 91.21,177.08 90.67,177.70 90.11,178.34 89.53,179.00 88.93,179.67 88.31,180.34 87.67,181.00 87.00,181.66 86.31,182.30 85.60,182.91 84.87,183.48 84.12,184.02 83.35,184.52 82.57,184.97 81.77,185.36 80.97,185.69 80.16,185.96 79.36,186.16 78.55,186.29 77.74,186.34 76.95,186.33 76.17,186.24 75.40,186.07 74.66,185.83 73.94,185.52 73.24,185.14 72.58,184.69 71.94,184.17 71.34,183.59 70.78,182.96 70.25,182.27 69.75,181.53 69.30,180.76 68.88,179.94 68.50,179.10 68.16,178.23 67.85,177.35 67.57,176.45 67.32,175.55 67.10,174.65 66.89,173.76 66.71,172.88 66.54,172.02 66.37,171.19 66.22,170.38 66.06,169.61 65.89,168.87 65.71,168.17 65.51,167.52 65.28,166.92 65.03,166.36 64.73,165.86 64.37,165.43 63.94,165.07 63.44,164.77 62.88,164.52 62.28,164.29 61.63,164.09 60.93,163.91 60.19,163.74 59.42,163.58 58.61,163.43 57.78,163.26 56.92,163.09 56.04,162.91 55.15,162.70 54.25,162.48 53.35,162.23 52.45,161.95 51.57,161.64 50.70,161.30 49.86,160.92 49.04,160.50 48.27,160.05 47.53,159.55 46.84,159.02 46.21,158.46 45.63,157.86 45.11,157.22 44.66,156.56 44.28,155.86 43.97,155.14 43.73,154.40 43.56,153.63 43.47,152.85 43.46,152.06 43.51,151.25 43.64,150.44 43.84,149.64 44.11,148.83 44.44,148.03 44.83,147.23 45.28,146.45 45.78,145.68 46.32,144.93 46.89,144.20 47.50,143.49 48.14,142.80 48.80,142.13 49.46,141.49 50.13,140.87 50.80,140.27 51.46,139.69 52.10,139.13 52.72,138.59 53.31,138.07 53.87,137.55 54.38,137.05 54.84,136.55 55.26,136.05 55.61,135.55 55.89,135.04 56.09,134.52 56.18,133.96 56.19,133.38 56.13,132.77 56.03,132.14 55.87,131.47 55.68,130.78 55.46,130.06 55.21,129.31 54.94,128.53 54.67,127.72 54.38,126.89 54.11,126.04 53.84,125.17 53.58,124.28 53.35,123.37 53.14,122.46 52.97,121.53 52.83,120.61 52.74,119.69 52.69,118.78 52.70,117.88 52.76,117.00 52.87,116.14 53.04,115.30 53.27,114.50 53.57,113.74 53.92,113.01 54.33,112.33 54.80,111.70 55.32,111.12 55.90,110.60 56.53,110.13 57.21,109.72 57.94,109.37 58.70,109.07 59.50,108.84 60.34,108.67 61.20,108.56 62.08,108.50 62.98,108.49 63.89,108.54 64.81,108.63 65.73,108.77 66.66,108.94 67.57,109.15 68.48,109.38 69.37,109.64 70.24,109.91 71.09,110.18 71.92,110.47 72.73,110.74 73.51,111.01 74.26,111.26 74.98,111.48 75.67,111.67 76.34,111.83 76.97,111.93 77.58,111.99 78.16,111.98 78.72,111.89 79.24,111.69 79.75,111.41 80.25,111.06 80.75,110.64 81.25,110.18 81.75,109.67 82.27,109.11 82.79,108.52 83.33,107.90 83.89,107.26 84.47,106.60 85.07,105.93 85.69,105.26 86.33,104.60 87.00,103.94 87.69,103.30 88.40,102.69 89.13,102.12 89.88,101.58 90.65,101.08 91.43,100.63 92.23,100.24 93.03,99.91 93.84,99.64 94.64,99.44 95.45,99.31 96.26,99.26 97.05,99.27 97.83,99.36 98.60,99.53 99.34,99.77 100.06,100.08 100.76,100.46 101.42,100.91 102.06,101.43 102.66,102.01 103.22,102.64 103.75,103.33 104.25,104.07 104.70,104.84 105.12,105.66 105.50,106.50 105.84,107.37 106.15,108.25 106.43,109.15 106.68,110.05 106.90,110.95 107.11,111.84 107.29,112.72 107.46,113.58 107.63,114.41 107.78,115.22 107.94,115.99 108.11,116.73 108.29,117.43 108.49,118.08 108.72,118.68 108.97,119.24 109.27,119.74 109.63,120.17 110.06,120.53 110.56,120.83 111.12,121.08 111.72,121.31 112.37,121.51 113.07,121.69 113.81,121.86 114.58,122.02 115.39,122.17 116.22,122.34 117.08,122.51 117.96,122.69 118.85,122.90 119.75,123.12 120.65,123.37 121.55,123.65 122.43,123.96 123.30,124.30 124.14,124.68 124.96,125.10 125.73,125.55 126.47,126.05 127.16,126.58 127.79,127.14 128.37,127.74 128.89,128.38 129.34,129.04 129.72,129.74 130.03,130.46 130.27,131.20 130.44,131.97 130.53,132.75 130.54,133.54 130.49,134.35 130.36,135.16 130.16,135.96 129.89,136.77 129.56,137.57 129.17,138.37 128.72,139.15 128.22,139.92 127.68,140.67 127.11,141.40 126.50,142.11" fill="#fff"/><circle cx="75" cy="102.8" r="5.9" fill="#6e5ea6"/><circle cx="116.5" cy="113.3" r="5.9" fill="#1db8e8"/><circle cx="46.6" cy="132.7" r="5.9" fill="#e2493a"/><circle cx="127.2" cy="154.6" r="5.9" fill="#4db6aa"/><circle cx="57.4" cy="172.3" r="5.9" fill="#dc5c9d"/><circle cx="98.9" cy="183.6" r="5.9" fill="#fbd737"/><g transform="translate(30,90) scale(0.0714286)" fill="#2c2a5e"><path d="M615,830 C600,700 680,560 800,510 C880,478 960,470 990,500 C1030,540 1010,610 960,630 C860,650 720,700 615,830 Z"/><path d="M600,1025 C610,900 680,790 780,750 C830,730 880,740 890,790 C895,830 870,850 830,860 C730,885 640,930 600,1025 Z"/></g><g transform="translate(50,230) scale(0.04221190375685943)" fill="none" stroke="#fff" stroke-width="70" stroke-linecap="round"><rect x="270" y="290" width="1215" height="940" rx="115"/><line x1="270" y1="440" x2="1485" y2="440" stroke-linecap="butt"/><circle cx="660" cy="690" r="107"/><path d="M440,1085 C470,980 540,935 660,935 C780,935 850,980 880,1085"/><line x1="1020" y1="650" x2="1320" y2="650"/><line x1="1020" y1="795" x2="1320" y2="795"/><line x1="1020" y1="940" x2="1320" y2="940"/></g><g transform="translate(55,355) scale(0.04221190375685943)" fill="none" stroke="#fff" stroke-width="75" stroke-linecap="round"><rect x="295" y="415" width="920" height="930" rx="120"/><line x1="295" y1="620" x2="1215" y2="620" stroke-linecap="butt"/><line x1="295" y1="865" x2="1215" y2="865" stroke-linecap="butt"/><line x1="295" y1="1105" x2="1215" y2="1105" stroke-linecap="butt"/><line x1="595" y1="620" x2="595" y2="1345" stroke-linecap="butt"/><line x1="915" y1="620" x2="915" y2="1345" stroke-linecap="butt"/><line x1="505" y1="260" x2="505" y2="415"/><line x1="1015" y1="260" x2="1015" y2="415"/></g><g transform="translate(55,485) scale(0.03897116134060795)" fill="none" stroke="#fff" stroke-width="80" stroke-linecap="round" stroke-linejoin="round"><path d="M230,400 L350,520 L560,280"/><path d="M230,790 L350,910 L560,670"/><line x1="700" y1="405" x2="1420" y2="405"/><line x1="700" y1="800" x2="1420" y2="800"/><line x1="615" y1="1190" x2="1420" y2="1190"/><circle cx="350" cy="1190" r="45" fill="#fff" stroke="none"/><circle cx="350" cy="1190" r="40" fill="#fff"/></g><g transform="translate(50,605) scale(0.04868549172346641)" fill="none" stroke="#fff" stroke-width="58" stroke-linejoin="round"><path d="M665,385 L665,870 L965,1165 A432,432 0 1 1 665,385 Z"/><path d="M830,325 L830,720 L1225,720 A395,395 0 0 0 830,325 Z"/><path d="M905,880 L1285,880 A375,375 0 0 1 1160,1140 Z"/></g><g transform="translate(50,740) scale(0.03895597974289053)" fill="none" stroke="#fff" stroke-width="85" stroke-linecap="round" stroke-linejoin="round"><circle cx="718" cy="465" r="265"/><path d="M820,935 L560,935 C360,935 215,1100 215,1290 L215,1370 L1090,1370" stroke-linecap="butt"/><polygon points="1220.0,758.5 1271.9,735.9 1274.3,642.4 1415.7,642.4 1418.1,735.9 1470.0,758.5 1515.5,792.2 1597.7,747.5 1668.4,869.9 1588.6,918.8 1595.0,975.0 1588.6,1031.2 1668.4,1080.1 1597.7,1202.5 1515.5,1157.8 1470.0,1191.5 1418.1,1214.1 1415.7,1307.6 1274.3,1307.6 1271.9,1214.1 1220.0,1191.5 1174.5,1157.8 1092.3,1202.5 1021.6,1080.1 1101.4,1031.2 1095.0,975.0 1101.4,918.8 1021.6,869.9 1092.3,747.5 1174.5,792.2"/><circle cx="1345" cy="975" r="88"/></g><g transform="translate(55,870) scale(0.03571428571428571)" fill="none" stroke="#fff" stroke-width="85" stroke-linecap="round" stroke-linejoin="round"><path d="M690,210 L400,210 C320,210 255,280 255,360 L255,1180 C255,1260 320,1330 400,1330 L690,1330" stroke-linecap="butt"/><line x1="660" y1="770" x2="1500" y2="770"/><path d="M1150,370 L1540,770 L1150,1160"/></g><circle cx="76.7" cy="1577" r="41.8" fill="#35bbee"/><path d="M62.7,1556.5 L89.9,1556.5 Q94.2,1556.5 94.2,1560.8 L94.2,1598.2 L83.7,1592 L62.7,1592 Q58.4,1592 58.4,1587.7 L58.4,1560.8 Q58.4,1556.5 62.7,1556.5 Z" fill="#fff"/><g fill="none" stroke="#222" stroke-width="2.3" stroke-linecap="round" stroke-linejoin="round"><line x1="673.4" y1="100.6" x2="673.4" y2="115.8"/><line x1="678" y1="108" x2="691" y2="108"/><path d="M684.3,102.2 L678,108 L684.3,113.9"/></g><path d="M660.45,246.25 L669.60,254.55 L678.75,246.25" fill="none" stroke="#2f2d5e" stroke-width="1.95" stroke-linecap="round" stroke-linejoin="round"/><path d="M627.65,372.65 L641.15,386.15 M641.15,372.65 L627.65,386.15" fill="none" stroke="#2d2b5c" stroke-width="2.2" stroke-linecap="round"/><path d="M662.05,375.85 L671.20,384.15 L680.35,375.85" fill="none" stroke="#2f2d5e" stroke-width="1.95" stroke-linecap="round" stroke-linejoin="round"/><path d="M374.25,376.75 L383.75,386.25 M383.75,376.75 L374.25,386.25" fill="none" stroke="#555" stroke-width="2.0" stroke-linecap="round"/><polygon points="654.5,452.2 669.5,452.2 662,461.6" fill="#111"/><path d="M230.5,629.9 L239.2,630.2 Q240.6,630.3 241.5,631.2 L248.6,639.4 Q250,641.2 248.6,642.8 L241.3,650.6 Q239.7,652.1 238.2,650.6 L229.6,641.5 Q228.3,640 228.3,638.4 L228.5,632.0 Q228.6,630 230.5,629.9 Z" fill="#f00"/><circle cx="233.8" cy="635.6" r="1.7" fill="#ffb0b0"/><path d="M508.25,632.25 L518.75,642.75 M518.75,632.25 L508.25,642.75" fill="none" stroke="#333" stroke-width="2.2" stroke-linecap="round"/><path d="M589.25,653.05 L603.75,667.55 M603.75,653.05 L589.25,667.55" fill="none" stroke="#2d2b5c" stroke-width="2.2" stroke-linecap="round"/><path d="M625.05,656.25 L634.80,666.75 L644.55,656.25" fill="none" stroke="#2f2d5e" stroke-width="1.95" stroke-linecap="round" stroke-linejoin="round"/><circle cx="669.5" cy="657.5" r="7.3" fill="none" stroke="#2d2b5c" stroke-width="2.3"/><line x1="674.8" y1="662.8" x2="682.6" y2="670.2" stroke="#2d2b5c" stroke-width="2.6" stroke-linecap="round"/><path d="M627.65,805.25 L641.15,818.75 M641.15,805.25 L627.65,818.75" fill="none" stroke="#2d2b5c" stroke-width="2.2" stroke-linecap="round"/><path d="M662.05,808.35 L671.20,816.65 L680.35,808.35" fill="none" stroke="#2f2d5e" stroke-width="1.95" stroke-linecap="round" stroke-linejoin="round"/><path d="M627.65,932.25 L641.15,945.75 M641.15,932.25 L627.65,945.75" fill="none" stroke="#2d2b5c" stroke-width="2.2" stroke-linecap="round"/><path d="M662.05,935.35 L671.20,943.65 L680.35,935.35" fill="none" stroke="#2f2d5e" stroke-width="1.95" stroke-linecap="round" stroke-linejoin="round"/><circle cx="242.05" cy="1047.5" r="12.05" fill="#000"/><path d="M242.05,1041 L242.05,1047.3 L246.8,1050.9" fill="none" stroke="#fff" stroke-width="1.7" stroke-linecap="round" stroke-linejoin="round"/><path d="M624.25,1169.75 L637.75,1183.25 M637.75,1169.75 L624.25,1183.25" fill="none" stroke="#2d2b5c" stroke-width="2.2" stroke-linecap="round"/><path d="M660.35,1172.85 L669.50,1181.15 L678.65,1172.85" fill="none" stroke="#2f2d5e" stroke-width="1.95" stroke-linecap="round" stroke-linejoin="round"/><g fill="#e2f9ff"><rect x="743.8" y="96.4" width="2.1" height="24.1"/><rect x="743.8" y="118.4" width="31.9" height="2.1"/><rect x="749.4" y="108.4" width="4.3" height="8.2"/><rect x="755.7" y="100.3" width="4.3" height="16.3"/><rect x="761.5" y="104.4" width="4.2" height="12.2"/><rect x="767.5" y="98.3" width="4.3" height="18.3"/></g><polygon points="2461,113.6 2477.4,113.6 2469.2,104.7" fill="#d8eefa"/><g fill="none" stroke="#e2f6ff" stroke-width="4.3"><path d="M2498.5,104.9 A9.65,9.65 0 0 1 2515.2,101.4"/><path d="M2517.1,110.1 A9.65,9.65 0 0 1 2501.1,114.5"/></g><polygon points="2519.7,95.9 2519.7,105.3 2510.3,105.3" fill="#e2f6ff"/><polygon points="2495.9,119.0 2495.9,109.6 2505.0,109.6" fill="#e2f6ff"/><polygon points="1624.5,606 1640,606 1632.2,598.6" fill="#8a8a8a"/><g fill="none" stroke="#e2f9ff" stroke-width="2.2"><rect x="745.9" y="637.1" width="23.6" height="19.8" rx="2.4"/><line x1="745.9" y1="643.5" x2="769.5" y2="643.5"/><line x1="745.9" y1="649.3" x2="769.5" y2="649.3"/><line x1="753.6" y1="641" x2="753.6" y2="656.9"/><line x1="761.7" y1="641" x2="761.7" y2="656.9"/></g><rect x="745.9" y="637.1" width="23.6" height="4.2" fill="#e2f9ff"/><polygon points="813.90,720 830.40,720 822.15,729.4" fill="#555"/><polygon points="1071.80,720 1088.30,720 1080.05,729.4" fill="#555"/><polygon points="1358.80,720 1375.30,720 1367.05,729.4" fill="#555"/><polygon points="2497.40,720 2513.90,720 2505.65,729.4" fill="#555"/><path d="M2405.15,1581.55 L2420.65,1597.05 M2420.65,1581.55 L2405.15,1597.05" fill="none" stroke="#fff" stroke-width="2.3" stroke-linecap="round"/></svg>
</body></html>
